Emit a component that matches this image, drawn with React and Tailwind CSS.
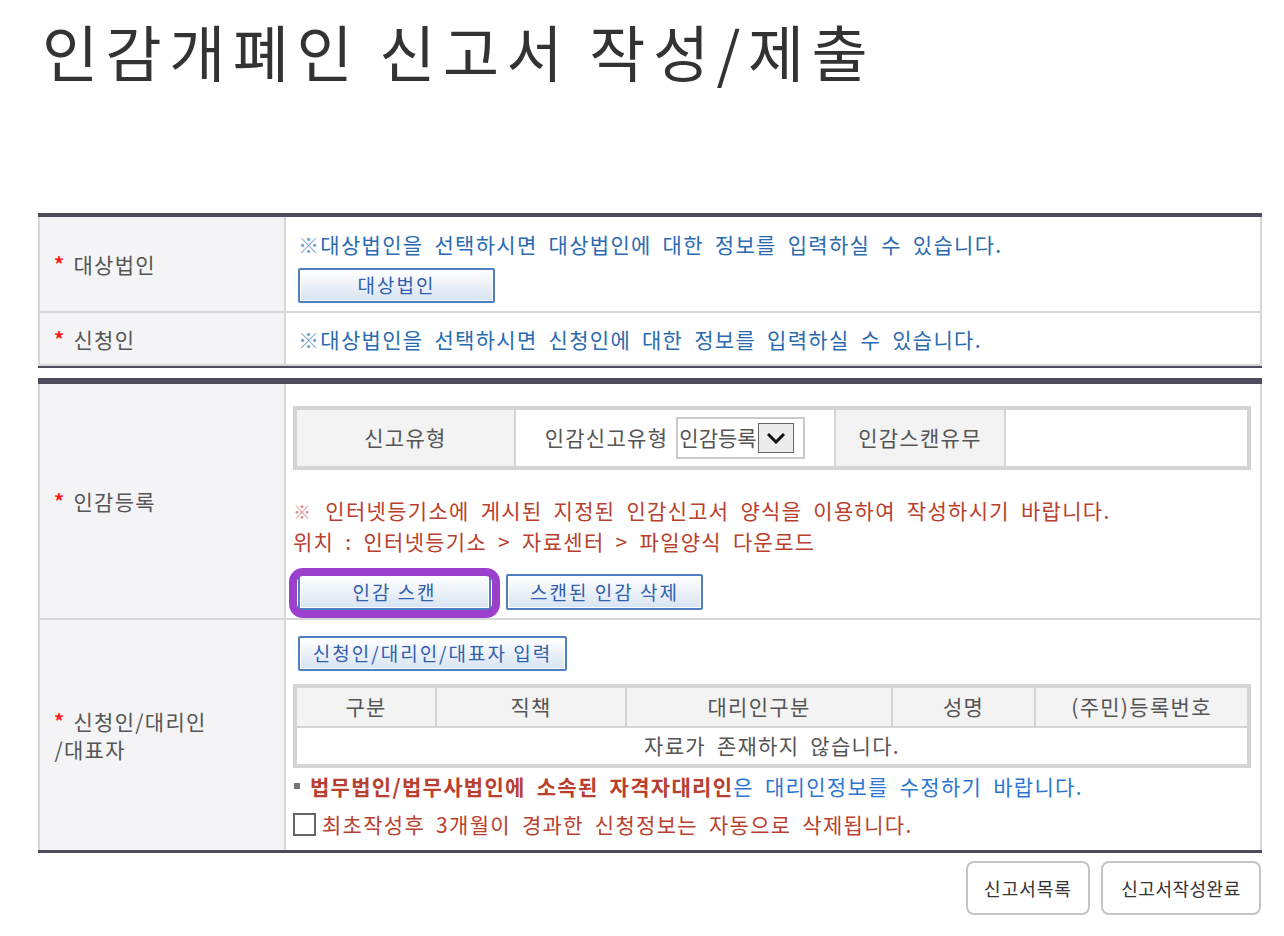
import React from 'react';

const ROW_LABEL = "w-[246px] shrink-0 bg-[#f4f4f6] border-r-2 border-[#d7d7db] flex items-center pl-[14px] text-[#555] leading-[28px]";

function Label({ children }) {
    return (
        <div className="flex items-start">
            <span className="text-[#ff1a1a] font-bold text-[20px] mr-[8px] leading-[28px]">*</span>
            <span>{children}</span>
        </div>
    );
}

function BlueButton({ children, className = '' }) {
    return (
        <button className={`h-[35px] border-2 border-[#4f7fc3] rounded-[2px] bg-gradient-to-b from-white to-[#d8e3f2] text-[#2f5fae] text-[19px] tracking-[2px] shadow-[inset_0_0_0_1px_#ffffff] ${className}`}>
            {children}
        </button>
    );
}

export default function App() {
    return (
        <div className="min-h-screen bg-white font-['Noto_Sans_CJK_KR','Noto_Sans',sans-serif] text-[21px] tracking-[1.3px] [word-spacing:5px]">
            {/* Title */}
            <h1 className="pl-[42px] pt-[20px] text-[61px] leading-none tracking-[7.5px] [word-spacing:-2px] text-[#333] font-normal">
                인감개폐인 신고서 작성/제출
            </h1>

            {/* Table 1 */}
            <div className="ml-[38px] w-[1224px] mt-[132px] border-t-4 border-b-2 border-[#4d4b5c]">
                <div className="flex h-[96px] border-b-2 border-[#d7d7db] border-x-2 border-x-[#d7d7db]">
                    <div className={ROW_LABEL}>
                        <Label>대상법인</Label>
                    </div>
                    <div className="flex-1 pl-[12px] pt-[14px]">
                        <p className="text-[#2a6bb0] leading-[26px]">
                            <span className="text-[#7d9fd0]">※</span>대상법인을 선택하시면 대상법인에 대한 정보를 입력하실 수 있습니다.
                        </p>
                        <BlueButton className="mt-[11px] w-[197px] h-[34px]">대상법인</BlueButton>
                    </div>
                </div>
                <div className="flex h-[53px] border-b-2 border-[#d7d7db] border-x-2 border-x-[#d7d7db]">
                    <div className={ROW_LABEL}>
                        <Label>신청인</Label>
                    </div>
                    <div className="flex-1 pl-[12px] flex items-center">
                        <p className="text-[#2a6bb0] leading-[26px]">
                            <span className="text-[#7d9fd0]">※</span>대상법인을 선택하시면 신청인에 대한 정보를 입력하실 수 있습니다.
                        </p>
                    </div>
                </div>
            </div>

            {/* Table 2 */}
            <div className="ml-[38px] w-[1224px] mt-[10px] border-t-[6px] border-b-[3px] border-[#4d4b5c]">
                {/* 인감등록 */}
                <div className="flex h-[236px] border-b-2 border-[#d7d7db] border-x-2 border-x-[#d7d7db]">
                    <div className={ROW_LABEL}>
                        <Label>인감등록</Label>
                    </div>
                    <div className="flex-1 pl-[7px] pr-[9px] pt-[22px]">
                        <div className="flex h-[64px] border-4 border-[#d4d4d4] text-[#555]">
                            <div className="w-[219px] bg-[#f3f3f3] border-r-2 border-[#d4d4d4] flex items-center justify-center">신고유형</div>
                            <div className="w-[320px] border-r-2 border-[#d4d4d4] flex items-center justify-center gap-[8px]">
                                <span>인감신고유형</span>
                                <div className="w-[129px] h-[42px] border-2 border-[#cacaca] flex items-center pl-[1px] gap-[1px] tracking-normal">
                                    <span className="[word-spacing:0]">인감등록</span>
                                    <span className="w-[36px] h-[30px] border border-[#666] bg-[#ececec] flex items-center justify-center">
                                        <svg width="20" height="12" viewBox="0 0 20 12" fill="none">
                                            <polyline points="2,2 10,10 18,2" stroke="#111" strokeWidth="3" />
                                        </svg>
                                    </span>
                                </div>
                            </div>
                            <div className="w-[170px] bg-[#f3f3f3] border-r-2 border-[#d4d4d4] flex items-center justify-center">인감스캔유무</div>
                            <div className="flex-1"></div>
                        </div>
                        <div className="mt-[25px] text-[#b9402e] leading-[30px]">
                            <p>
                                <span className="text-[#d98a8a] text-[18px] mr-[2px]">※</span> 인터넷등기소에 게시된 지정된 인감신고서 양식을 이용하여 작성하시기 바랍니다.
                            </p>
                            <p>위치 : 인터넷등기소 &gt; 자료센터 &gt; 파일양식 다운로드</p>
                        </div>
                        <div className="mt-[18px] flex gap-[15px] pl-[5px]">
                            <div className="relative">
                                <BlueButton className="w-[193px] h-[36px]">인감 스캔</BlueButton>
                                <span className="absolute -left-[9px] -right-[9px] -top-[6px] -bottom-[8px] border-[8px] border-[#9a40cc] rounded-[14px] pointer-events-none"></span>
                            </div>
                            <BlueButton className="w-[197px] h-[36px]">스캔된 인감 삭제</BlueButton>
                        </div>
                    </div>
                </div>

                {/* 신청인/대리인/대표자 */}
                <div className="flex h-[230px] border-x-2 border-[#d7d7db]">
                    <div className={ROW_LABEL}>
                        <Label>
                            신청인/대리인
                            <br />
                            <span className="-ml-[19px]">/대표자</span>
                        </Label>
                    </div>
                    <div className="flex-1 pl-[7px] pr-[9px] pt-[16px]">
                        <BlueButton className="ml-[5px] w-[269px] px-0 tracking-[1px]">신청인/대리인/대표자 입력</BlueButton>
                        <div className="mt-[13px] border-4 border-[#d4d4d4] text-[#555]">
                            <div className="flex h-[40px] bg-[#f3f3f3] border-b-2 border-[#d4d4d4]">
                                <div className="w-[140px] border-r-2 border-[#d4d4d4] flex items-center justify-center">구분</div>
                                <div className="w-[190px] border-r-2 border-[#d4d4d4] flex items-center justify-center">직책</div>
                                <div className="w-[266px] border-r-2 border-[#d4d4d4] flex items-center justify-center">대리인구분</div>
                                <div className="w-[143px] border-r-2 border-[#d4d4d4] flex items-center justify-center">성명</div>
                                <div className="flex-1 flex items-center justify-center">(주민)등록번호</div>
                            </div>
                            <div className="h-[36px] flex items-center justify-center">자료가 존재하지 않습니다.</div>
                        </div>
                        <p className="mt-[3px] leading-[30px] flex items-center">
                            <span className="w-[6px] h-[6px] bg-[#777] ml-[1px] mr-[10px]"></span>
                            <span className="font-bold text-[#b9402e]">법무법인/법무사법인에 소속된 자격자대리인</span>
                            <span className="text-[#2b76d2]">은 대리인정보를 수정하기 바랍니다.</span>
                        </p>
                        <div className="mt-[8px] flex items-center leading-[30px]">
                            <span className="w-[23px] h-[23px] border-2 border-[#666] bg-white shrink-0"></span>
                            <span className="ml-[6px] text-[#b9402e]">최초작성후 3개월이 경과한 신청정보는 자동으로 삭제됩니다.</span>
                        </div>
                    </div>
                </div>
            </div>

            {/* Footer buttons */}
            <div className="ml-[38px] w-[1224px] mt-[8px] flex justify-end gap-[11px] pr-[1px]">
                <button className="w-[124px] h-[54px] border-2 border-[#c4c4c4] rounded-[8px] bg-white text-[18px] tracking-[1px] text-[#333] [word-spacing:0]">신고서목록</button>
                <button className="w-[160px] h-[54px] border-2 border-[#c4c4c4] rounded-[8px] bg-white text-[18px] tracking-[0.5px] text-[#333] [word-spacing:0]">신고서작성완료</button>
            </div>
        </div>
    );
}
